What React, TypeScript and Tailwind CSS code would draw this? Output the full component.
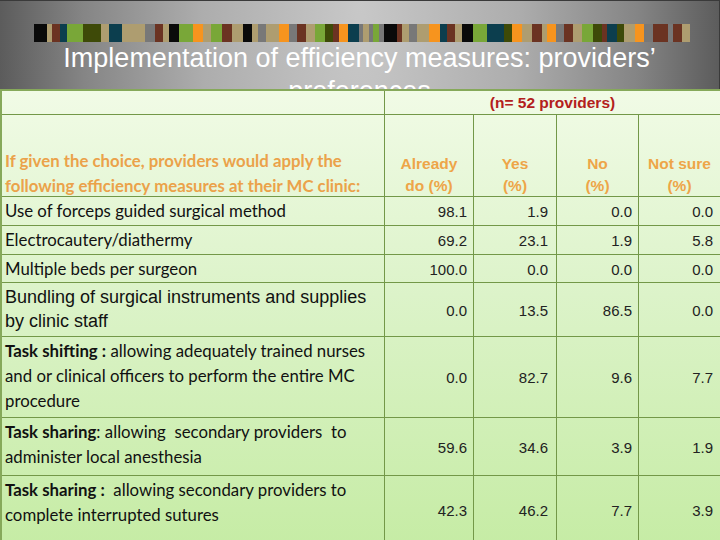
import React from "react";

const C: Record<string, string> = {
  k: "#0a0a0a",
  t: "#ae9d70",
  b: "#6b3322",
  s: "#0c3e4e",
  g: "#79a738",
  o: "#3e4a08",
  y: "#787878",
  r: "#f7941e",
};

const segs: [number, number, string][] = [
  [34, 47, "k"], [47, 52, "t"], [52, 60, "b"], [60, 67, "s"], [67, 83, "g"], [83, 101, "o"],
  [101, 109, "t"], [109, 122, "s"], [122, 145, "t"], [145, 155, "y"], [155, 163, "b"], [163, 169, "t"],
  [169, 179, "k"], [179, 193, "g"], [193, 203, "r"], [203, 211, "t"], [211, 222, "g"], [222, 232, "b"],
  [232, 243, "t"], [243, 252, "k"], [252, 258, "t"], [258, 266, "y"], [266, 279, "t"], [279, 289, "r"],
  [289, 297, "y"], [297, 306, "b"], [306, 315, "t"], [315, 325, "g"], [325, 333, "o"], [333, 339, "b"],
  [339, 348, "r"], [348, 359, "s"], [359, 363, "y"], [363, 369, "t"], [369, 373, "y"], [373, 379, "g"],
  [379, 384, "y"], [384, 397, "k"], [397, 402, "b"], [402, 409, "t"], [409, 417, "y"], [417, 429, "t"],
  [429, 440, "r"], [440, 447, "s"], [447, 455, "b"], [455, 462, "t"], [462, 473, "k"], [473, 487, "g"],
  [487, 504, "s"], [504, 512, "o"], [512, 522, "r"], [522, 532, "t"], [532, 542, "b"], [542, 547, "t"],
  [547, 556, "r"], [556, 564, "y"], [564, 573, "b"], [573, 582, "t"], [582, 593, "g"], [593, 602, "o"],
  [602, 607, "b"], [607, 617, "s"], [617, 624, "o"], [624, 635, "t"], [635, 644, "r"], [644, 653, "y"],
  [653, 668, "b"], [668, 673, "y"], [673, 682, "b"], [682, 690, "t"],
];

type Row = { label: React.ReactNode; vals: string[]; arial?: boolean };

const rows: Row[] = [
  { label: <>Use of forceps guided surgical method</>, vals: ["98.1", "1.9", "0.0", "0.0"] },
  { label: <>Electrocautery/diathermy</>, vals: ["69.2", "23.1", "1.9", "5.8"] },
  { label: <>Multiple beds per surgeon</>, vals: ["100.0", "0.0", "0.0", "0.0"] },
  {
    label: (
      <>
        Bundling of surgical instruments and supplies
        <br />
        by clinic staff
      </>
    ),
    vals: ["0.0", "13.5", "86.5", "0.0"],
    arial: true,
  },
  {
    label: (
      <>
        <b>Task shifting :</b> allowing adequately trained nurses
        <br />
        and or clinical officers to perform the entire MC
        <br />
        procedure
      </>
    ),
    vals: ["0.0", "82.7", "9.6", "7.7"],
  },
  {
    label: (
      <>
        <b>Task sharing</b>: allowing&nbsp; secondary providers&nbsp; to
        <br />
        administer local anesthesia
      </>
    ),
    vals: ["59.6", "34.6", "3.9", "1.9"],
  },
  {
    label: (
      <>
        <b>Task sharing :</b>&nbsp; allowing secondary providers to
        <br />
        complete interrupted sutures
      </>
    ),
    vals: ["42.3", "46.2", "7.7", "3.9"],
  },
];

const headers = [
  ["Already", "do (%)"],
  ["Yes", "(%)"],
  ["No", "(%)"],
  ["Not sure", "(%)"],
];

const numPad = ["pr-[6px]", "pr-[8px]", "pr-[6px]", "pr-[7px]"];

export default function App() {
  return (
    <div className="relative w-[720px] h-[540px] overflow-hidden bg-[radial-gradient(ellipse_55%_220%_at_50%_0%,#c8c8c8_0%,#adadad_40%,#858585_70%,#4a4a4a_100%)]">
      <div className="h-[89px] overflow-hidden flex flex-col items-center border-t border-t-[#3a3a3a] border-r border-r-[#3a3a3a]">
        <svg width="720" height="18" className="mt-[23px] shrink-0" viewBox="0 0 720 18">
          {segs.map(([a, b, c], i) => (
            <rect key={i} x={a} y={0} width={b - a} height={18} fill={C[c]} />
          ))}
        </svg>
        <div className="mt-0 w-[720px] text-center text-white text-[27px] leading-[33px] font-['Liberation_Sans',Arial,sans-serif]">
          Implementation of efficiency measures: providers’ preferences
        </div>
      </div>

      <div className="grid w-[723px] grid-cols-[383px_89px_83px_82px_82px] grid-rows-[24px_82px_29px_29px_28px_54px_81px_58px_68px] border-l-2 border-t-2 border-[#86a95a] bg-[linear-gradient(to_bottom,#f1fbe6,#dcf3c9_45%,#c6eca5)]">
        {/* row 0 */}
        <div className="border-r border-b border-[#739848]" />
        <div className="col-span-4 border-r border-b border-[#739848] flex justify-center pt-[2px] text-[15.5px] leading-[20px] font-bold text-[#b3201c] font-['Liberation_Sans',Arial,sans-serif]">
          (n= 52 providers)
        </div>

        {/* row 1 */}
        <div className="border-r border-b border-[#739848] pl-[3px] pt-[33px] text-[16.8px] leading-[25px] font-bold text-[#eba24a] font-['Lato',sans-serif]">
          If given the choice, providers would apply the
          <br />
          following efficiency measures at their MC clinic:
        </div>
        {headers.map((h, i) => (
          <div
            key={i}
            className="border-r border-b border-[#739848] pt-[38px] text-center text-[15.5px] leading-[22px] font-bold text-[#eea548] font-['Liberation_Sans',Arial,sans-serif]"
          >
            {h[0]}
            <br />
            {h[1]}
          </div>
        ))}

        {rows.map((r, ri) => (
          <React.Fragment key={ri}>
            <div
              className={
                r.arial
                  ? "border-r border-b border-[#739848] pl-[3px] pt-[2px] text-[18px] leading-[24px] text-[#111] font-['Liberation_Sans',Arial,sans-serif]"
                  : "border-r border-b border-[#739848] pl-[3px] pt-[1px] text-[16.8px] leading-[25px] text-[#111] font-['Lato',sans-serif]"
              }
            >
              {r.label}
            </div>
            {r.vals.map((v, vi) => (
              <div
                key={vi}
                className={`border-r border-b border-[#739848] flex items-center justify-end pt-[3px] ${numPad[vi]} text-[15px] text-[#222] font-['Liberation_Sans',Arial,sans-serif]`}
              >
                {v}
              </div>
            ))}
          </React.Fragment>
        ))}
      </div>
    </div>
  );
}
